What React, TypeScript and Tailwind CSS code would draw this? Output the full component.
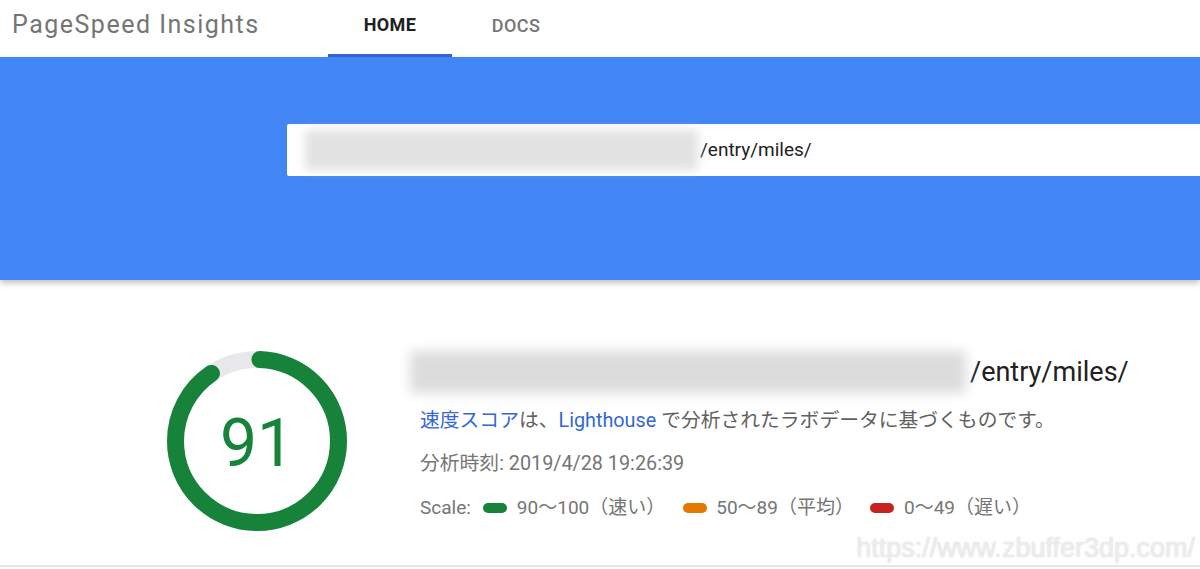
export default function App() {
  const r = 81.5;
  const c = 2 * Math.PI * r;
  const score = 91;

  return (
    <div className="relative h-[569px] w-[1200px] overflow-hidden bg-white font-['Roboto','Noto_Sans_CJK_JP',sans-serif]">
      {/* header */}
      <header className="flex h-[57px] items-end">
        <div className="flex h-full w-[328px] items-center pl-3 pb-[7px] text-[25px] tracking-[1.5px] text-[#757575]">
          PageSpeed Insights
        </div>
        <nav className="flex h-full">
          <a className="flex w-[124px] items-center justify-center border-b-[3px] border-[#3367d6] pb-[6px] text-[18px] font-bold tracking-[0.4px] text-[#212121]">
            HOME
          </a>
          <a className="flex w-[128px] items-center justify-center pb-[6px] text-[18px] font-medium tracking-[0.4px] text-[#757575]">
            DOCS
          </a>
        </nav>
      </header>

      {/* blue search band */}
      <section className="relative z-10 h-[223px] bg-[#4285f4] pl-[287px] pt-[67px] shadow-[0_3px_6px_rgba(0,0,0,0.25)]">
        <div className="flex h-[52px] items-center rounded-l-[2px] bg-white pl-[18px] pr-1">
          <div className="h-[40px] w-[393px] bg-[#e2e2e2] blur-[5px]" />
          <span className="ml-[2px] text-[19px] text-[#212121]">/entry/miles/</span>
        </div>
      </section>

      {/* result */}
      <section className="flex h-[287px] border-b-2 border-[#e6e6e6] pt-[70px]">
        <div className="ml-[166px] w-[244px]">
          <div className="relative h-[182px] w-[182px]">
            <svg width="182" height="182" viewBox="0 0 182 182" className="-rotate-90">
              <circle cx="91" cy="91" r={r} fill="none" stroke="#e8e8ea" strokeWidth="17" />
              <circle
                cx="91"
                cy="91"
                r={r}
                fill="none"
                stroke="#178239"
                strokeWidth="17"
                strokeLinecap="round"
                strokeDasharray={`${(c * score) / 100 - 6} ${c}`}
                strokeDashoffset={-3}
              />
            </svg>
            <div className="absolute inset-0 flex items-center justify-center pt-[4px] text-[66px] text-[#178239]">
              91
            </div>
          </div>
        </div>

        <div className="flex flex-col">
          <div className="flex h-[44px] items-center">
            <div className="h-[42px] w-[556px] bg-[#dcdcdc] blur-[6px]" />
            <span className="ml-[4px] text-[27px] text-[#212121]">/entry/miles/</span>
          </div>
          <p className="mt-[13px] pl-[10px] text-[19.8px] leading-[28px] text-[#616161]">
            <a className="text-[#3367d6]">速度スコア</a>は、
            <a className="text-[#3367d6]">Lighthouse</a> で分析されたラボデータに基づくものです。
          </p>
          <p className="mt-[15px] pl-[10px] text-[19.8px] leading-[28px] text-[#757575]">分析時刻: 2019/4/28 19:26:39</p>
          <div className="mt-[16px] flex h-[28px] items-center pl-[10px] text-[19px] text-[#757575]">
            <span>Scale:</span>
            <span className="ml-[12px] h-[10px] w-[24px] rounded-full bg-[#178239]" />
            <span className="ml-[10px]">90～100（速い）</span>
            <span className="ml-[18px] h-[10px] w-[24px] rounded-full bg-[#e67700]" />
            <span className="ml-[9px]">50～89（平均）</span>
            <span className="ml-[16px] h-[10px] w-[24px] rounded-full bg-[#c7221f]" />
            <span className="ml-[10px]">0～49（遅い）</span>
          </div>
        </div>
      </section>

      {/* watermark */}
      <div className="absolute bottom-[1px] right-[5px] font-['Liberation_Sans',sans-serif] text-[27px] text-[#ececec] [text-shadow:0_0_2px_rgba(0,0,0,0.15)]">
        https://www.zbuffer3dp.com/
      </div>
    </div>
  );
}
